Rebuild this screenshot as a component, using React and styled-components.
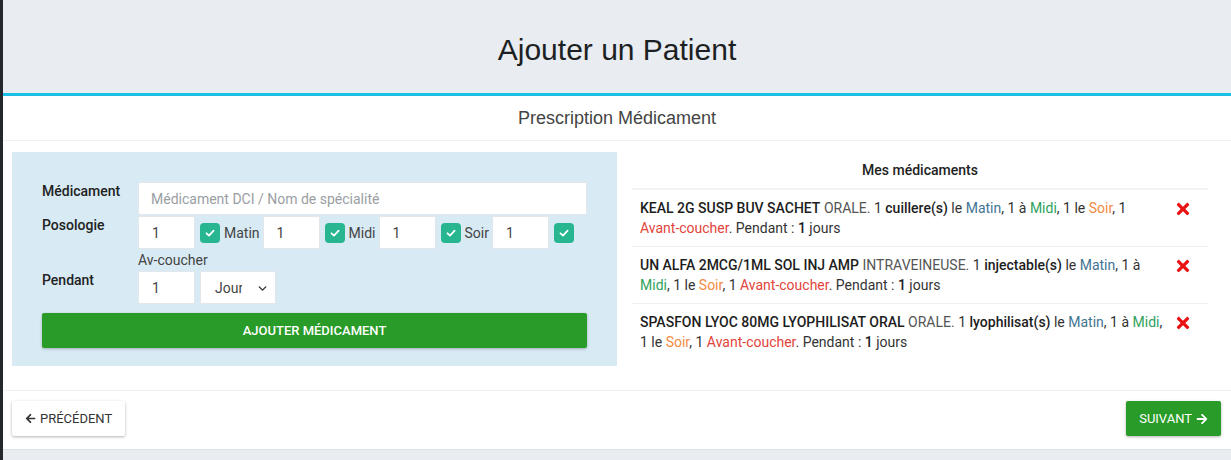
import React from "react";
import styled, { createGlobalStyle } from "styled-components";
import { FaTimes, FaArrowLeft, FaArrowRight } from "react-icons/fa";
import { ChevronDown } from "lucide-react";

const GlobalStyle = createGlobalStyle`
  html, body {
    margin: 0;
    padding: 0;
    background: #fff;
  }
  body {
    font-family: Roboto, "Noto Sans", sans-serif;
    color: #333;
  }
  * { box-sizing: border-box; }
`;

const meds = [
  {
    name: "KEAL 2G SUSP BUV SACHET",
    route: "ORALE.",
    unit: "cuillere(s)",
  },
  {
    name: "UN ALFA 2MCG/1ML SOL INJ AMP",
    route: "INTRAVEINEUSE.",
    unit: "injectable(s)",
  },
  {
    name: "SPASFON LYOC 80MG LYOPHILISAT ORAL",
    route: "ORALE.",
    unit: "lyophilisat(s)",
  },
];

const Check = () => (
  <CheckBox>
    <svg width="12" height="12" viewBox="0 0 12 12">
      <polyline
        points="2.5,6.3 5,8.6 9.6,3.6"
        fill="none"
        stroke="#fff"
        strokeWidth="1.8"
        strokeLinecap="round"
        strokeLinejoin="round"
      />
    </svg>
  </CheckBox>
);

const App = () => {
  return (
    <Page>
      <GlobalStyle />
      <Header>
        <h1>Ajouter un Patient</h1>
      </Header>
      <SubHeader>Prescription Médicament</SubHeader>
      <Content>
        <FormPanel>
          <FormRow>
            <Label>Médicament</Label>
            <TextInput placeholder="Médicament DCI / Nom de spécialité" />
          </FormRow>
          <FormRow>
            <Label>Posologie</Label>
            <Wrap>
              <NumInput defaultValue="1" />
              <Check />
              <CheckLabel>Matin</CheckLabel>
              <NumInput defaultValue="1" />
              <Check />
              <CheckLabel>Midi</CheckLabel>
              <NumInput defaultValue="1" />
              <Check />
              <CheckLabel>Soir</CheckLabel>
              <NumInput defaultValue="1" />
              <Check />
              <CheckLabel $wrap>Av-coucher</CheckLabel>
            </Wrap>
          </FormRow>
          <FormRow>
            <Label>Pendant</Label>
            <Wrap>
              <NumInput defaultValue="1" />
              <SelectBox>
                <select defaultValue="j">
                  <option value="j">Jours</option>
                  <option value="s">Semaines</option>
                </select>
                <ChevronDown size={13} strokeWidth={2.6} />
              </SelectBox>
            </Wrap>
          </FormRow>
          <AddButton>Ajouter médicament</AddButton>
        </FormPanel>

        <ListPanel>
          <ListTitle>Mes médicaments</ListTitle>
          {meds.map((m) => (
            <MedRow key={m.name}>
              <MedText>
                <b>{m.name}</b> <Muted>{m.route}</Muted> 1 <b>{m.unit}</b> le{" "}
                <Tone $c="#3f7592">Matin</Tone>, 1 à <Tone $c="#2f9f5b">Midi</Tone>, 1
                le <Tone $c="#f38b43">Soir</Tone>, 1{" "}
                <Tone $c="#e2443b">Avant-coucher</Tone>. Pendant : <b>1</b> jours
              </MedText>
              <Remove>
                <FaTimes size={18} />
              </Remove>
            </MedRow>
          ))}
        </ListPanel>
      </Content>
      <Footer>
        <NavButton>
          <FaArrowLeft size={11} /> Précédent
        </NavButton>
        <NavButton $primary>
          Suivant <FaArrowRight size={12} />
        </NavButton>
      </Footer>
      <BottomBand />
    </Page>
  );
};

export default App;

const Page = styled.div`
  width: 1231px;
  height: 460px;
  border-left: 3px solid #23282c;
  display: flex;
  flex-direction: column;
  overflow: hidden;
  background: #fff;
`;

const Header = styled.div`
  height: 96px;
  flex: none;
  background: #e9ecf0;
  border-bottom: 3px solid #1ac0e6;
  display: flex;
  align-items: center;
  justify-content: center;

  h1 {
    margin: 6px 0 0;
    font-family: "Liberation Sans", Arial, sans-serif;
    font-weight: 400;
    font-size: 30px;
    color: #1c1f23;
  }
`;

const SubHeader = styled.div`
  height: 45px;
  flex: none;
  border-bottom: 1px solid #eef0f2;
  display: flex;
  align-items: center;
  justify-content: center;
  font-family: "Liberation Sans", Arial, sans-serif;
  font-size: 18px;
  color: #444;
`;

const Content = styled.div`
  display: grid;
  grid-template-columns: 605px 576px;
  column-gap: 15px;
  padding: 11px 0 24px 9px;
  align-items: start;
`;

const FormPanel = styled.div`
  background: #d8eaf4;
  padding: 30px 30px 18px;
  display: flex;
  flex-direction: column;
`;

const FormRow = styled.div`
  display: flex;
  align-items: flex-start;
  margin-bottom: 1px;
`;

const Label = styled.div`
  width: 96px;
  flex: none;
  font-size: 14px;
  font-weight: 500;
  line-height: 19px;
  color: #222;
`;

const TextInput = styled.input`
  flex: 1;
  height: 33px;
  border: 1px solid #e3e6ea;
  border-radius: 2px;
  padding: 0 12px;
  font-family: inherit;
  font-size: 14px;
  outline: none;

  &::placeholder {
    color: #9a9ea3;
  }
`;

const Wrap = styled.div`
  flex: 1;
  display: flex;
  flex-wrap: wrap;
  align-items: center;
`;

const NumInput = styled.input`
  width: 57px;
  height: 33px;
  border: 1px solid #e3e6ea;
  padding: 0 13px;
  font-family: inherit;
  font-size: 14px;
  color: #444;
  outline: none;
`;

const CheckBox = styled.span`
  width: 20px;
  height: 20px;
  margin-left: 5px;
  border-radius: 4px;
  background: #27b690;
  display: inline-flex;
  align-items: center;
  justify-content: center;
`;

const CheckLabel = styled.span`
  font-size: 14px;
  color: #444;
  line-height: 20px;
  margin: 0 3px 0 4px;
  ${(p) => p.$wrap && "margin: 1px 0 0; flex-basis: 77px;"}
`;

const SelectBox = styled.div`
  position: relative;
  margin-left: 5px;
  width: 76px;
  height: 33px;

  select {
    appearance: none;
    width: 100%;
    height: 100%;
    border: 1px solid #e3e6ea;
    background: #fff;
    padding: 0 33px 0 14px;
    font-family: inherit;
    font-size: 14px;
    color: #444;
    outline: none;
  }

  svg {
    position: absolute;
    right: 7px;
    top: 11px;
    color: #333;
    pointer-events: none;
  }
`;

const AddButton = styled.button`
  margin-top: 8px;
  height: 35px;
  border: none;
  border-radius: 2px;
  background: #289b28;
  color: #fff;
  font-family: inherit;
  font-size: 13px;
  font-weight: 500;
  text-transform: uppercase;
  box-shadow: 0 1px 3px rgba(0, 0, 0, 0.25);
`;

const ListPanel = styled.div`
  display: flex;
  flex-direction: column;
`;

const ListTitle = styled.div`
  text-align: center;
  font-size: 14px;
  font-weight: 500;
  line-height: 20px;
  color: #222;
  padding: 8px 0 8px;
  border-bottom: 2px solid #f0f2f4;
`;

const MedRow = styled.div`
  display: flex;
  align-items: flex-start;
  padding: 8px 8px 8px 8px;
  border-bottom: 1px solid #eef0f2;

  &:last-child {
    border-bottom: none;
  }
`;

const MedText = styled.div`
  flex: 1;
  font-size: 14px;
  line-height: 20px;
  color: #333;
  padding-right: 2px;

  b {
    font-weight: 500;
    color: #1d1d1d;
  }
`;

const Muted = styled.span`
  color: #555;
`;

const Tone = styled.span`
  color: ${(p) => p.$c};
`;

const Remove = styled.span`
  width: 34px;
  padding-top: 2px;
  display: flex;
  justify-content: center;
  color: #ea1313;
`;

const Footer = styled.div`
  flex: none;
  border-top: 1px solid #eef0f2;
  padding: 10px 10px 0 9px;
  height: 59px;
  display: flex;
  justify-content: space-between;
  align-items: flex-start;
`;

const NavButton = styled.button`
  height: 35px;
  padding: 0 13px;
  border: none;
  border-radius: 2px;
  display: inline-flex;
  align-items: center;
  gap: 4px;
  font-family: inherit;
  font-size: 13px;
  text-transform: uppercase;
  background: ${(p) => (p.$primary ? "#289b28" : "#fff")};
  color: ${(p) => (p.$primary ? "#fff" : "#333")};
  box-shadow: 0 1px 3px rgba(0, 0, 0, 0.3);
`;

const BottomBand = styled.div`
  flex: 1;
  background: #e9ecf0;
  border-top: 1px solid #dde1e5;
`;
